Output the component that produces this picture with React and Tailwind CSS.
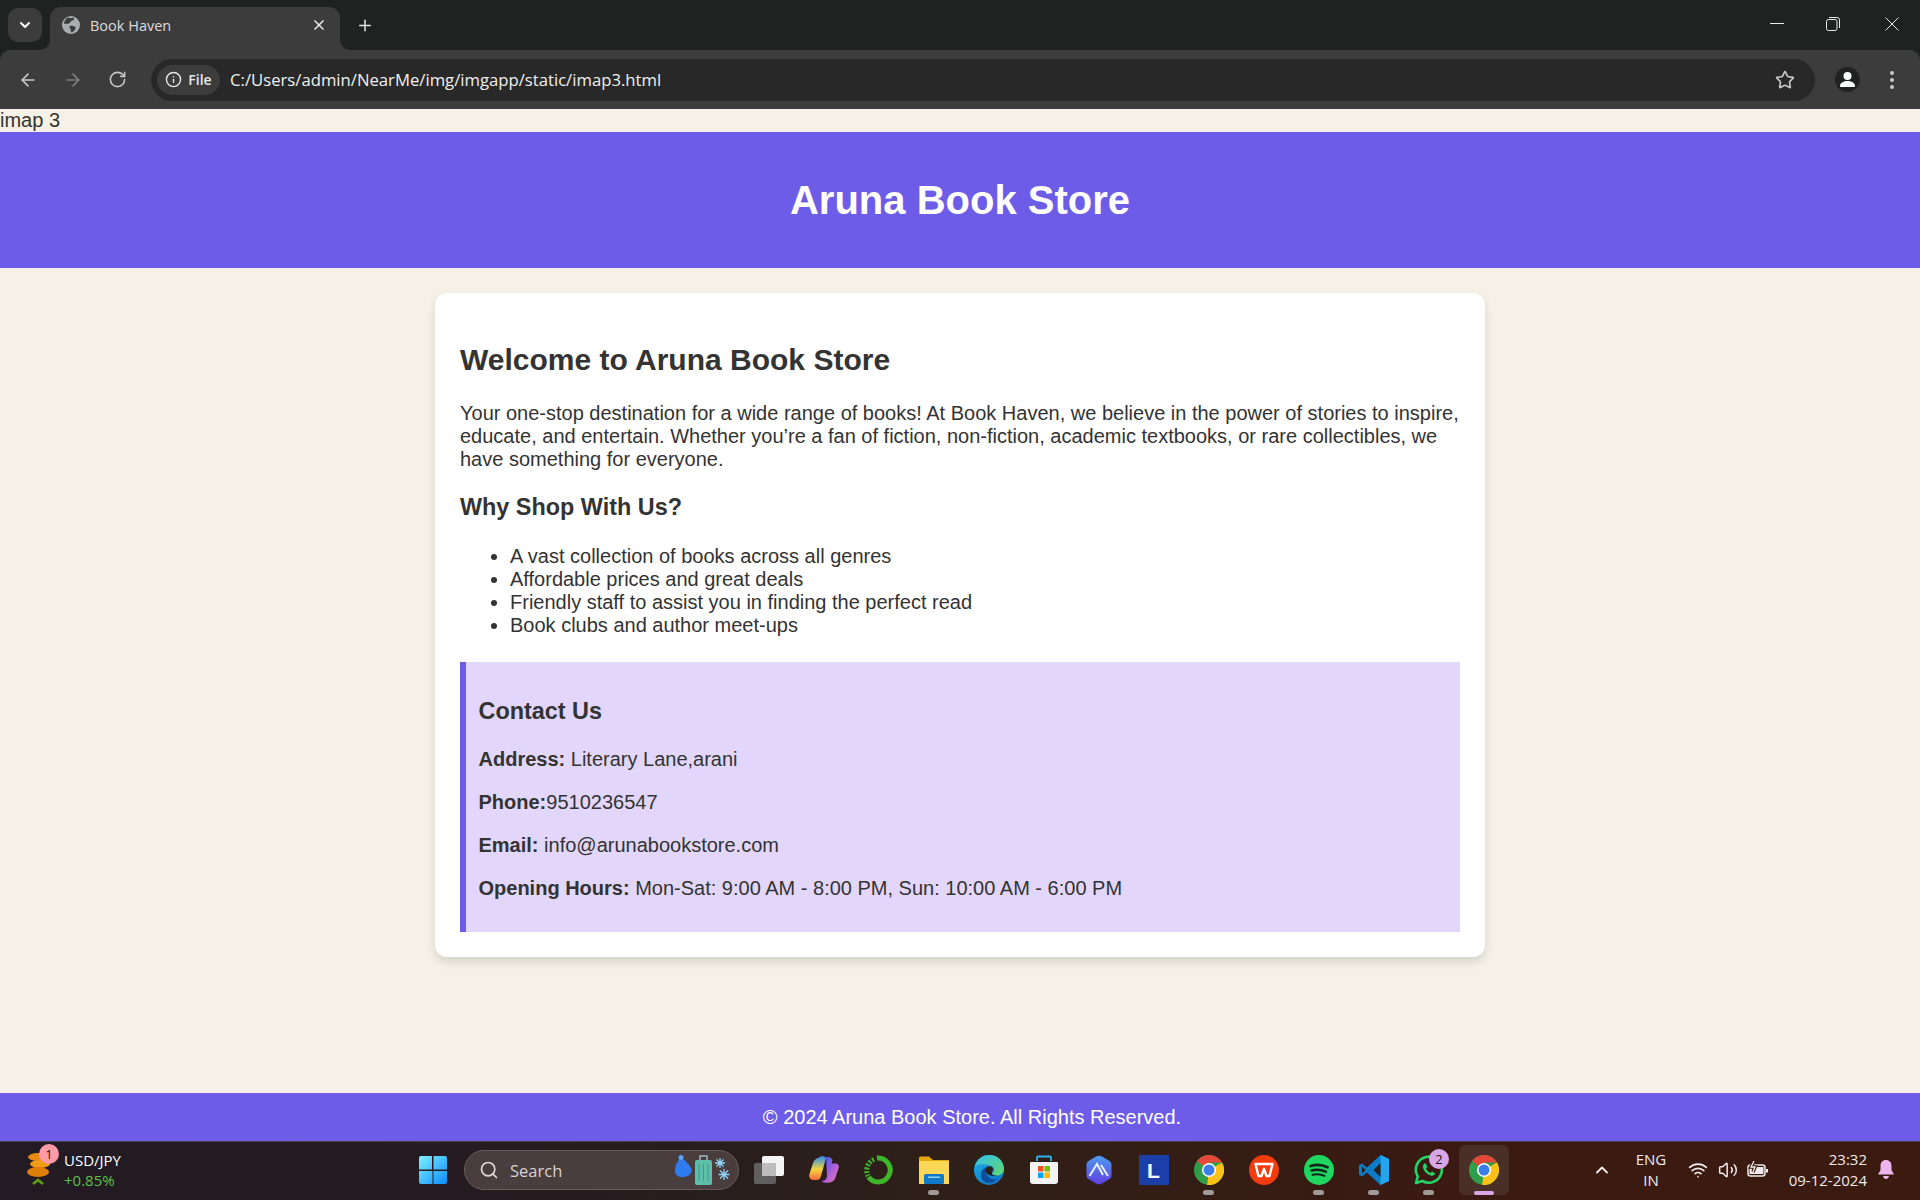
import { ArrowLeft, ArrowRight, ChevronDown, ChevronUp, Info, Plus, RotateCw, Search, Star, Volume2, Wifi, X } from "lucide-react";

const UI_FONT = "font-['Open_Sans',sans-serif]";

const REASONS = [
  "A vast collection of books across all genres",
  "Affordable prices and great deals",
  "Friendly staff to assist you in finding the perfect read",
  "Book clubs and author meet-ups",
];

function Globe() {
  return (
    <svg width="18" height="18" viewBox="0 0 18 18">
      <circle cx="9" cy="9" r="9" fill="#a9adb1" />
      <path d="M6 1.500c2 1 4.500 .5 6 0 .8 1.500-1 3-2.500 3.500-1.500 .4-1 2-2.500 2.500C5 8.200 3.500 7.500 2 8c0-3 2-5.500 4-6.500zM8 10c2-.8 5 0 5.500 1.500.4 1.500-2 4.500-4 5-1-1.500-.5-3-1.500-4-.6-.8-.8-1.800 0-2.500z" fill="#3c3c3c" />
    </svg>
  );
}

function TabFlare({ side }) {
  return (
    <svg width="10" height="10" viewBox="0 0 10 10" className={side === "left" ? "absolute bottom-0 left-[-10px]" : "absolute bottom-0 right-[-10px]"}>
      <path d={side === "left" ? "M10 0v10H0a10 10 0 0 0 10-10z" : "M0 0v10h10A10 10 0 0 1 0 0z"} fill="#3c3c3c" />
    </svg>
  );
}

function TitleBar() {
  return (
    <div className="flex h-[50px] flex-none items-end bg-[#202222] pl-2">
      <div className="mb-2 flex h-[34px] w-[34px] flex-none items-center justify-center rounded-[10px] bg-[#3c3c3c] text-white">
        <ChevronDown size={16} strokeWidth={3} />
      </div>
      <div className="relative ml-2 flex h-[43px] w-[290px] flex-none items-center rounded-t-[11px] bg-[#3c3c3c] pb-[7px] pl-[12px] pr-[13px]">
        <TabFlare side="left" />
        <Globe />
        <span className={`ml-[10px] flex-1 text-[14.5px] text-[#dcdcdc] ${UI_FONT}`}>Book Haven</span>
        <X size={16} strokeWidth={2.5} className="text-[#e6e6e6]" />
        <TabFlare side="right" />
      </div>
      <div className="mb-[8px] ml-[16px] flex h-[34px] w-[18px] flex-none items-center justify-center text-[#e6e6e6]">
        <Plus size={19} strokeWidth={2} />
      </div>
      <div className="flex-1" />
      <div className="mb-[14px] flex h-[24px] flex-none items-center">
        <svg width="14" height="2" className="mr-[42px]"><rect width="14" height="1" fill="#e8e8e8" /></svg>
        <svg width="14" height="14" viewBox="0 0 14 14" fill="none" stroke="#e8e8e8" className="mr-[45px]">
          <rect x=".5" y="2.500" width="10.500" height="11" rx="2" />
          <path d="M3 .5h8a2.500 2.500 0 0 1 2.500 2.500v8" />
        </svg>
        <svg width="14" height="14" viewBox="0 0 14 14" fill="none" stroke="#e8e8e8" className="mr-[21px]">
          <path d="M.5 .5l13 13M13.500 .5l-13 13" />
        </svg>
      </div>
    </div>
  );
}

function AddressBar() {
  return (
    <div className="flex-none bg-[#202222]">
      <div className="flex h-[59px] items-center rounded-t-[10px] bg-[#3c3c3c] pl-[18px] pr-[26px]">
        <ArrowLeft size={20} strokeWidth={2} className="text-[#c8c8c8]" />
        <ArrowRight size={20} strokeWidth={2} className="ml-[25px] text-[#7d7d7d]" />
        <RotateCw size={19} strokeWidth={2} className="ml-[25px] text-[#c8c8c8]" />
        <div className="ml-[24px] flex h-[42px] flex-1 items-center rounded-full bg-[#282828] pl-[6px] pr-[20px]">
          <div className="flex h-[30px] w-[63px] flex-none items-center justify-center gap-[6px] rounded-full bg-[#3c3c3c] text-[#e8e8e8]">
            <Info size={17} strokeWidth={2} />
            <span className={`text-[14px] font-semibold ${UI_FONT}`}>File</span>
          </div>
          <span className={`ml-[10px] flex-1 text-[16.7px] text-[#f0f0f0] ${UI_FONT}`}>
            C:/Users/admin/NearMe/img/imgapp/static/imap3.html
          </span>
          <Star size={20} strokeWidth={2} className="text-[#c8c8c8]" />
        </div>
        <div className="ml-[20px] flex h-[25px] w-[25px] flex-none items-center justify-center rounded-full bg-[#202222]">
          <svg width="17" height="17" viewBox="0 0 17 17" fill="#fff">
            <circle cx="8.500" cy="5" r="4" />
            <path d="M1 15c0-3.500 4-5 7.500-5S16 11.500 16 15c0 1-.5 1-1 1H2c-.5 0-1 0-1-1z" />
          </svg>
        </div>
        <div className="ml-[30px] flex flex-none flex-col gap-[3px]">
          <span className="h-1 w-1 rounded-full bg-[#c8c8c8]" />
          <span className="h-1 w-1 rounded-full bg-[#c8c8c8]" />
          <span className="h-1 w-1 rounded-full bg-[#c8c8c8]" />
        </div>
      </div>
    </div>
  );
}

function ContactLine({ label, children }) {
  return (
    <p>
      <strong className="font-bold">{label}</strong>
      {children}
    </p>
  );
}

function WindowsLogo() {
  return (
    <svg width="30" height="30" viewBox="0 0 30 30">
      <defs>
        <linearGradient id="win" x1="0" y1="0" x2="1" y2="1">
          <stop offset="0" stopColor="#7ff0ff" />
          <stop offset="1" stopColor="#0a8cff" />
        </linearGradient>
      </defs>
      <path d="M1 3a2 2 0 0 1 2-2h11v13.500H1zM15.500 1H27a2 2 0 0 1 2 2v11.500H15.500zM1 16h13.500v13H3a2 2 0 0 1-2-2zM15.500 16H29v11a2 2 0 0 1-2 2H15.500z" fill="url(#win)" />
    </svg>
  );
}

function ChromeIcon() {
  return (
    <svg width="30" height="30" viewBox="0 0 24 24">
      <circle cx="12" cy="12" r="12" fill="#2f9e49" />
      <path d="M12 12L22.400 6A12 12 0 0 1 10.500 23.900z" fill="#fbc116" />
      <path d="M12 12L2.400 4.800A12 12 0 0 1 22.400 6H12z" fill="#e5483a" />
      <circle cx="12" cy="12" r="5.600" fill="#fff" />
      <circle cx="12" cy="12" r="4.400" fill="#3b7de8" />
    </svg>
  );
}

function TaskView() {
  return (
    <svg width="30" height="30" viewBox="0 0 30 30">
      <rect x="8" y="1" width="22" height="20" rx="2" fill="#f4f4f4" />
      <rect x="0" y="8" width="22" height="21" rx="2" fill="#6a6a6a" fillOpacity=".85" />
      <rect x="8" y="8" width="14" height="13" rx="1" fill="#bdbdbd" />
    </svg>
  );
}

function Copilot() {
  return (
    <svg width="30" height="30" viewBox="0 0 30 30">
      <defs>
        <linearGradient id="cpa" x1="0" y1="0" x2="0" y2="1">
          <stop offset="0" stopColor="#2a8cf0" />
          <stop offset=".55" stopColor="#f5d53c" />
          <stop offset="1" stopColor="#f06a3a" />
        </linearGradient>
        <linearGradient id="cpb" x1="0" y1="0" x2="1" y2="1">
          <stop offset="0" stopColor="#2f5fe8" />
          <stop offset=".5" stopColor="#a35ae0" />
          <stop offset="1" stopColor="#f27ab0" />
        </linearGradient>
      </defs>
      <path d="M9 3c3-2.500 7-2 8 0l-5 18c-.8 3-2.500 4-4 4H4c-3 0-4.500-3-3.500-6L4 8c.8-2.500 2.500-4 5-5z" fill="url(#cpa)" />
      <path d="M17 2h2c2.500 0 3.500 1 4.500 3l-1 3.500H27c2 0 3.500 2 2.500 5l-3 9c-1 3-3 4.500-6 5-2.500 .5-6 .7-8-1.500 3 0 4.500-1.500 5.500-4.500z" fill="url(#cpb)" />
    </svg>
  );
}

function GreenRing() {
  return (
    <svg width="30" height="30" viewBox="0 0 30 30" fill="none">
      <path d="M13 3a12 12 0 1 1-8.500 19" stroke="#3fb62a" strokeWidth="5" />
      <path d="M10 4.500A12 12 0 0 0 4 21" stroke="#3fb62a" strokeWidth="5" strokeDasharray="2 1.600" />
    </svg>
  );
}

function Folder() {
  return (
    <svg width="30" height="30" viewBox="0 0 30 30">
      <path d="M0 3a1.500 1.500 0 0 1 1.500-1.500H10l4 3.500h16v22H0z" fill="#e5a80b" />
      <rect y="6" width="30" height="23" fill="#fcd757" />
      <rect x="5" y="19" width="20" height="10" rx="1.500" fill="#0f78c8" />
      <rect x="9" y="21.500" width="12" height="1.500" fill="#8fd0f5" />
    </svg>
  );
}

function Edge() {
  return (
    <svg width="30" height="30" viewBox="0 0 30 30">
      <defs>
        <linearGradient id="ed" x1="0" y1="0" x2="1" y2="1">
          <stop offset="0" stopColor="#1fb0e8" />
          <stop offset="1" stopColor="#0c6cc0" />
        </linearGradient>
        <linearGradient id="edg" x1="0" y1="0" x2="1" y2="1">
          <stop offset="0" stopColor="#35c1f0" />
          <stop offset="1" stopColor="#5fd86a" />
        </linearGradient>
      </defs>
      <circle cx="15" cy="15" r="15" fill="url(#ed)" />
      <path d="M1 11C3 4 9 0 15 0c9 0 15 6 15 14 0 4-3 6.500-7 6.500-3 0-5-1-5-2.500 3-1 3-4 1-6-3.500-3.500-13-3.500-18-1z" fill="url(#edg)" />
      <path d="M23 24c-3 4-8 5-12 3-4-2-5-7-3-11 1-2 3-3.500 6-4-3 2-3 5-1 8 3 4 7 5.500 10 4z" fill="#0b4f9c" />
      <path d="M13 12c3-1.500 6-.5 6 2 0 1.500-1 3-1 4-.5 2 2 2.800 5 2.500-4 1-9 0-11-3-1.500-2-1-4 1-5.500z" fill="#2a2018" />
    </svg>
  );
}

function Store() {
  return (
    <svg width="30" height="30" viewBox="0 0 30 30">
      <path d="M8 6V2.500a1 1 0 0 1 1-1h12a1 1 0 0 1 1 1V6" fill="none" stroke="#2ab4ec" strokeWidth="1.800" />
      <path d="M2 7h26a1 1 0 0 1 1 1v18a3 3 0 0 1-3 3H4a3 3 0 0 1-3-3V8a1 1 0 0 1 1-1z" fill="#f3f3f3" />
      <rect x="9" y="11" width="5.500" height="5.500" fill="#f25022" />
      <rect x="15.500" y="11" width="5.500" height="5.500" fill="#7fba00" />
      <rect x="9" y="17.500" width="5.500" height="5.500" fill="#00a4ef" />
      <rect x="15.500" y="17.500" width="5.500" height="5.500" fill="#ffb900" />
    </svg>
  );
}

function Mountain() {
  return (
    <svg width="30" height="30" viewBox="0 0 30 30">
      <defs>
        <linearGradient id="mt" x1="0" y1="0" x2="0" y2="1">
          <stop offset="0" stopColor="#4f9cf0" />
          <stop offset="1" stopColor="#5f3fe0" />
        </linearGradient>
      </defs>
      <path d="M12 1.500a6 6 0 0 1 6 0l7.500 4.500a4 4 0 0 1 2 3.500v11a4 4 0 0 1-2 3.500L18 28.500a6 6 0 0 1-6 0L4.500 24a4 4 0 0 1-2-3.500v-11a4 4 0 0 1 2-3.500z" fill="url(#mt)" />
      <path d="M5.500 21L13 9l6 11M17 10l7 11" fill="none" stroke="#e6f0ff" strokeWidth="2" />
    </svg>
  );
}

function LTile() {
  return (
    <div className="flex h-[30px] w-[30px] items-center justify-center bg-[#1b3fa8] font-['Liberation_Sans',sans-serif] text-[21px] leading-none font-bold text-white">
      L
    </div>
  );
}

function Wps() {
  return (
    <svg width="30" height="30" viewBox="0 0 30 30">
      <circle cx="15" cy="15" r="15" fill="#f33c0e" />
      <path d="M6.500 9h17l-3 12h-3L15 14l-2.500 7h-3z" fill="none" stroke="#fff" strokeWidth="2.400" strokeLinejoin="round" />
    </svg>
  );
}

function Spotify() {
  return (
    <svg width="30" height="30" viewBox="0 0 30 30" fill="none" strokeLinecap="round">
      <circle cx="15" cy="15" r="15" fill="#1ed760" />
      <path d="M6.500 11c5-1.500 12-1.300 17 1.300" stroke="#16231a" strokeWidth="2.800" />
      <path d="M7.500 15.500c4.500-1.200 10-1 14.500 1.300" stroke="#16231a" strokeWidth="2.400" />
      <path d="M8.500 19.800c4-1 8.500-.8 12 1" stroke="#16231a" strokeWidth="2" />
    </svg>
  );
}

function VsCode() {
  return (
    <svg width="30" height="30" viewBox="0 0 30 30">
      <path d="M21.500 0L30 4v22l-8.500 4L8 17.500l-5 4-3-1.700v-9.600L3 8.500l5 4z" fill="#0a7cc8" />
      <path d="M21.500 0L30 4v22l-8.500 4z" fill="#23a6f0" />
      <path d="M21.500 8l-7 7 7 7z" fill="#2a2018" />
      <path d="M3 11.500v7l3.500-3.500z" fill="#2a2018" />
    </svg>
  );
}

function WhatsApp() {
  return (
    <svg width="30" height="30" viewBox="0 0 30 30" fill="none">
      <path d="M2 28l1.800-6.500A13 13 0 1 1 8.500 26z" stroke="#25d366" strokeWidth="2.600" strokeLinejoin="round" />
      <path d="M10.500 8.500c-1.500 1-2 3-1 5.500 1.200 3 4 5.500 7 6.500 2.500 .7 4-.3 4.800-2l-3.300-2-1.500 1.500c-2-.8-3.500-2.300-4.500-4.500l1.300-1.500-1.500-3.500z" fill="#25d366" />
    </svg>
  );
}

function SearchArt() {
  return (
    <svg width="56" height="32" viewBox="0 0 56 32">
      <path d="M1 17c0-6 3-11 6-13 4 2 9 7 11 12-1 5-5 7-9 7-5 0-8-2-8-6z" fill="#2f7cf0" />
      <circle cx="7" cy="3.500" r="2.500" fill="#5aa0f5" />
      <rect x="21" y="6" width="17" height="25" rx="2" fill="#5dbfa8" />
      <path d="M26 6V2h7v4" fill="none" stroke="#9fb8c0" strokeWidth="1.500" />
      <path d="M25 10v17M29.500 10v17M34 10v17" stroke="#3d9d88" />
      <path d="M46 4v10M41 9h10M42.500 5.500l7 7M49.500 5.500l-7 7M50 15v11M44.500 20.500h11M46 16.500l8 8M54 16.500l-8 8" stroke="#8fd3f5" strokeWidth="1.300" />
    </svg>
  );
}

function Coins() {
  return (
    <svg width="24" height="36" viewBox="0 0 24 36">
      <ellipse cx="12" cy="5" rx="10" ry="4" fill="#e88a10" />
      <ellipse cx="14" cy="12" rx="10" ry="4" fill="#f09a18" />
      <ellipse cx="12" cy="20" rx="11" ry="5" fill="#e07c08" />
      <path d="M7 32l5-4 5 4" fill="none" stroke="#5f9e10" strokeWidth="2.800" />
    </svg>
  );
}

function Battery() {
  return (
    <svg width="22" height="18" viewBox="0 0 22 18" fill="none" stroke="#f0eaea" strokeWidth="1.500">
      <rect x="1" y="4" width="17" height="11" rx="2.500" />
      <rect x="2.500" y="6" width="14" height="7" fill="#f0eaea" stroke="none" />
      <rect x="19" y="8" width="2" height="3.500" fill="#f0eaea" stroke="none" />
      <path d="M7 0L4 6h4L6 11" stroke="#3a1a10" strokeWidth="3.500" />
      <path d="M7 0L4 6h4L6 11" strokeWidth="1.300" />
    </svg>
  );
}

function Bell() {
  return (
    <svg width="16" height="20" viewBox="0 0 16 20" fill="#eeb4ee">
      <path d="M8 0c3.500 0 5.500 2.500 5.500 6v4l2.500 4.500H0L2.500 10V6C2.500 2.500 4.500 0 8 0z" />
      <path d="M5 16h6c-.5 2-1.500 3-3 3s-2.500-1-3-3z" />
    </svg>
  );
}

const TASK_ICONS = [
  { id: "task", icon: <TaskView /> },
  { id: "copilot", icon: <Copilot /> },
  { id: "ring", icon: <GreenRing /> },
  { id: "folder", icon: <Folder />, open: true },
  { id: "edge", icon: <Edge /> },
  { id: "store", icon: <Store /> },
  { id: "mountain", icon: <Mountain /> },
  { id: "l", icon: <LTile /> },
  { id: "chrome", icon: <ChromeIcon />, open: true },
  { id: "wps", icon: <Wps /> },
  { id: "spotify", icon: <Spotify />, open: true },
  { id: "vscode", icon: <VsCode />, open: true },
  { id: "whatsapp", icon: <WhatsApp />, open: true, badge: "2" },
];

function TaskIcon({ item }) {
  return (
    <div className="relative flex h-[40px] w-[55px] flex-none items-center justify-center">
      {item.icon}
      {item.badge && (
        <span className="absolute left-[28px] top-[-1px] flex h-5 w-5 items-center justify-center rounded-full bg-[#d9a7e8] text-[13px] text-[#1a1a1a]">
          {item.badge}
        </span>
      )}
      {item.open && <span className="absolute bottom-[-5px] left-[22px] h-[5px] w-[11px] rounded-full bg-[#a09a98]" />}
    </div>
  );
}

function Taskbar() {
  return (
    <div className={`flex h-[59px] flex-none items-center border-t border-[#4a4048] bg-[linear-gradient(90deg,#221b23_0%,#261c20_30%,#2e2018_50%,#3a1a12_75%,#3b1a10_100%)] pb-[2px] ${UI_FONT}`}>
      <div className="relative ml-[26px] flex w-[392px] flex-none items-center">
        <Coins />
        <span className="absolute left-[13px] top-[-6px] flex h-5 w-5 items-center justify-center rounded-full bg-[#ff9aa8] text-[13px] text-[#1a1a1a]">1</span>
        <div className="ml-[14px] flex flex-col text-[15px] leading-[20px]">
          <span className="text-white">USD/JPY</span>
          <span className="text-[#5cc04a]">+0.85%</span>
        </div>
      </div>
      <WindowsLogo />
      <div className="ml-[16px] flex h-[40px] w-[275px] flex-none items-center rounded-full border border-[#6a5c5c] bg-[#4a3d3d] pl-[14px]">
        <Search size={20} strokeWidth={2} className="text-[#e0dada]" />
        <span className="ml-[11px] flex-1 text-[16.5px] text-[#d8d2d2]">Search</span>
        <SearchArt />
        <span className="w-[8px]" />
      </div>
      <div className="ml-[2px] flex flex-none items-center">
        {TASK_ICONS.map((item) => (
          <TaskIcon key={item.id} item={item} />
        ))}
        <div className="relative ml-[3px] flex h-[50px] w-[50px] flex-none items-center justify-center rounded-[6px] bg-[#4a2e28]">
          <ChromeIcon />
          <span className="absolute bottom-0 left-[15px] h-[4px] w-[20px] rounded-full bg-[#d9a7e8]" />
        </div>
      </div>
      <div className="ml-[83px] flex flex-none items-center text-[#f0eaea]">
        <ChevronUp size={20} strokeWidth={2.2} />
        <div className="ml-[23px] flex w-[32px] flex-col items-center text-[15px] leading-[21px]">
          <span>ENG</span>
          <span>IN</span>
        </div>
        <Wifi size={20} strokeWidth={2} className="ml-[21px]" />
        <Volume2 size={20} strokeWidth={1.8} className="ml-[10px]" />
        <span className="ml-[9px]"><Battery /></span>
        <div className="ml-[20px] flex w-[78px] flex-col items-end whitespace-nowrap text-[15px] leading-[21px]">
          <span>23:32</span>
          <span>09-12-2024</span>
        </div>
        <span className="ml-[11px]"><Bell /></span>
      </div>
    </div>
  );
}

export default function App() {
  return (
    <div className="flex h-[1200px] w-[1920px] flex-col overflow-hidden bg-[#f5f1e6] font-['Liberation_Sans',Arial,sans-serif] text-[20px] leading-[23px] text-[#333]">
      <TitleBar />
      <AddressBar />
      <div className="flex-none">imap 3</div>
      <header className="flex h-[136px] flex-none items-center justify-center bg-[#6c5ce7]">
        <h1 className="text-[40px] leading-[46px] font-bold text-white">Aruna Book Store</h1>
      </header>
      <main className="flex-1">
        <section className="mx-auto mt-[25px] w-[1050px] rounded-[12px] bg-white p-[25px] shadow-[0_5px_10px_rgba(0,0,0,0.12)]">
          <h2 className="mt-[25px] text-[30px] leading-[34px] font-bold">Welcome to Aruna Book Store</h2>
          <p className="mt-[25px]">
            Your one-stop destination for a wide range of books! At Book Haven, we believe in the power of stories to inspire,
            educate, and entertain. Whether you’re a fan of fiction, non-fiction, academic textbooks, or rare collectibles, we
            have something for everyone.
          </p>
          <h3 className="mt-[23px] text-[23.4px] leading-[27px] font-bold">Why Shop With Us?</h3>
          <ul className="mt-[24px] list-disc pl-[50px]">
            {REASONS.map((reason) => (
              <li key={reason}>{reason}</li>
            ))}
          </ul>
          <div className="mt-[25px] border-l-[6px] border-[#6c5ce7] bg-[#e2d7fb] px-[12.5px] pt-[12.5px] pb-[32.5px]">
            <h3 className="mt-[23px] text-[23.4px] leading-[27px] font-bold">Contact Us</h3>
            <div className="mt-[23px] flex flex-col gap-[20px]">
              <ContactLine label="Address:"> Literary Lane,arani</ContactLine>
              <ContactLine label="Phone:">9510236547</ContactLine>
              <ContactLine label="Email:"> info@arunabookstore.com</ContactLine>
              <ContactLine label="Opening Hours:"> Mon-Sat: 9:00 AM - 8:00 PM, Sun: 10:00 AM - 6:00 PM</ContactLine>
            </div>
          </div>
        </section>
      </main>
      <footer className="flex h-[48px] flex-none items-center justify-center bg-[#6c5ce7] pl-[24px] text-white">
        © 2024 Aruna Book Store. All Rights Reserved.
      </footer>
      <Taskbar />
    </div>
  );
}
